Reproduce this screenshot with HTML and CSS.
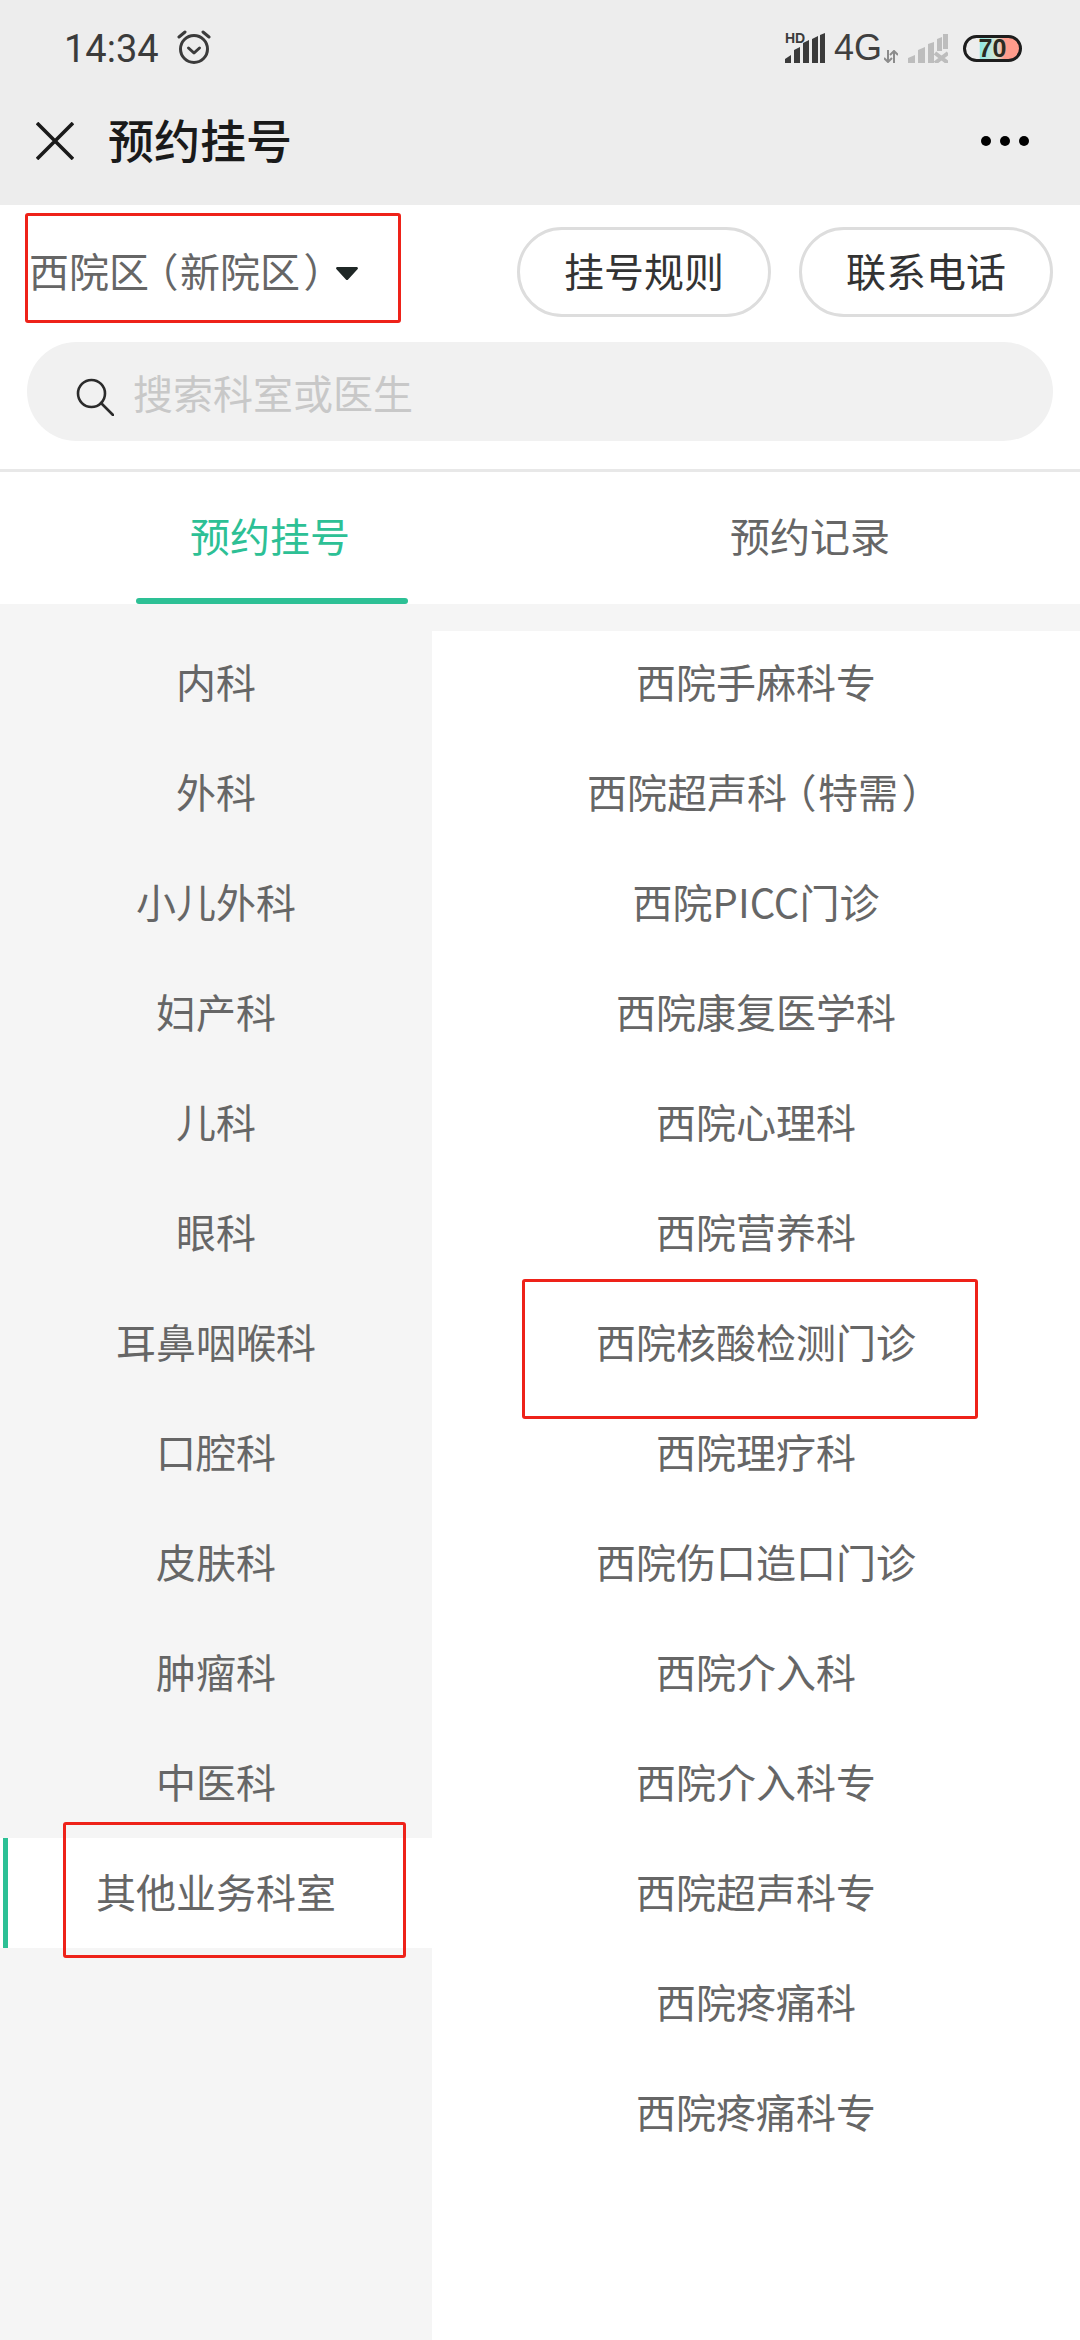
FILE: index.html
```html
<!DOCTYPE html>
<html lang="zh-CN">
  <head>
    <meta charset="UTF-8" />
    <meta name="viewport" content="width=device-width, initial-scale=1.0" />
    <title>预约挂号</title>
    <link rel="stylesheet" href="styles.css">
  </head>
  <body>
    <div class="page">
      <header class="top">
        <div class="status">
          <div class="status-left">
            <span class="time">14:34</span>
            <svg class="alarm" width="34" height="36" viewBox="0 0 34 36" fill="none" stroke="#3b3b3b" stroke-width="3" stroke-linecap="round" stroke-linejoin="round">
              <circle cx="17" cy="20" r="13.5" />
              <path d="M11.5 19l5.5 5 5.500-5" />
              <path d="M2 8l6-5M32 8l-6-5" />
            </svg>
          </div>
          <div class="status-right">
            <div class="signal">
              <span class="hd">HD</span>
              <svg width="40" height="30" viewBox="0 0 40 30" fill="#3b3b3b">
                <path d="M0 30v-4l6-4v8zM9 30V17l6-3v16zM18 30V10l6-3v23zM27 30V6l6-3v27zM35 30V2l5-2v30z" />
              </svg>
            </div>
            <span class="net">4G</span>
            <svg class="updown" width="14" height="13" viewBox="0 0 14 13" fill="none" stroke="#8c8c8c" stroke-width="2">
              <path d="M4 0v12M0 8l4 4 4-4M10 13V1M6 5l4-4 4 4" />
            </svg>
            <svg class="signal-off" width="40" height="29" viewBox="0 0 40 29" fill="#bdbdbd">
              <path d="M0 29v-5l7-3v8zM10 29V16l7-3v16zM20 29V10l6-2v21zM29 17V5l5-2v14zM35 15V0l5-1v16z" />
              <path d="M27 19l13 10M40 19L27 29" fill="none" stroke="#bdbdbd" stroke-width="4" />
            </svg>
            <div class="battery"><span class="battery-num">70</span></div>
          </div>
        </div>
        <nav class="navbar">
          <svg class="close" width="38" height="38" viewBox="0 0 38 38" fill="none" stroke="#1a1a1a" stroke-width="3.600">
            <path d="M1 1l36 36M37 1L1 37" />
          </svg>
          <h1 class="nav-title">预约挂号</h1>
          <div class="more"><i></i><i></i><i></i></div>
        </nav>
      </header>

      <section class="filters">
        <div class="filter-row">
          <div class="campus">
            <span class="campus-name">西院区<span class="paren-open">（</span>新院区<span class="paren-close">）</span></span>
            <svg class="caret" width="22" height="13" viewBox="0 0 22 13" fill="#1f2726">
              <path d="M1.500 0h19c1.300 0 1.900 1.400 1 2.300l-9.400 10.100c-.6.7-1.600.7-2.200 0L.5 2.300C-.4 1.400.2 0 1.500 0z" />
            </svg>
          </div>
          <div class="actions">
            <a class="pill">挂号规则</a>
            <a class="pill">联系电话</a>
          </div>
        </div>
        <div class="search">
          <svg class="search-icon" width="38" height="38" viewBox="0 0 38 38" fill="none" stroke="#2b2b2b" stroke-width="2.600" stroke-linecap="round">
            <circle cx="15.500" cy="15.500" r="13.500" />
            <path d="M25 25l12 12" />
          </svg>
          <span class="search-text">搜索科室或医生</span>
        </div>
      </section>

      <div class="tabs">
        <div class="tab active">预约挂号</div>
        <div class="tab">预约记录</div>
      </div>

      <main class="dept">
        <ul class="dept-left">
          <li>内科</li>
          <li>外科</li>
          <li>小儿外科</li>
          <li>妇产科</li>
          <li>儿科</li>
          <li>眼科</li>
          <li>耳鼻咽喉科</li>
          <li>口腔科</li>
          <li>皮肤科</li>
          <li>肿瘤科</li>
          <li>中医科</li>
          <li class="current">其他业务科室</li>
        </ul>
        <div class="dept-right">
          <ul>
            <li>西院手麻科专</li>
            <li><span>西院超声科<span class="paren-open">（</span>特需<span class="paren-close">）</span></span></li>
            <li>西院PICC门诊</li>
            <li>西院康复医学科</li>
            <li>西院心理科</li>
            <li>西院营养科</li>
            <li>西院核酸检测门诊</li>
            <li>西院理疗科</li>
            <li>西院伤口造口门诊</li>
            <li>西院介入科</li>
            <li>西院介入科专</li>
            <li>西院超声科专</li>
            <li>西院疼痛科</li>
            <li>西院疼痛科专</li>
          </ul>
        </div>
      </main>

      <div class="mark mark-campus"></div>
      <div class="mark mark-clinic"></div>
      <div class="mark mark-other"></div>
    </div>
  </body>
</html>
```

FILE: styles.css
```css
:root {
  --green: #2dc095;
  --text-grey: #666666;
  --left-bg: #f5f5f5;
  --red: #ee2219;
}

* {
  margin: 0;
  padding: 0;
  box-sizing: border-box;
}

body {
  font-family: "Noto Sans CJK SC", "Noto Sans", sans-serif;
  background-color: #ffffff;
  color: var(--text-grey);
}

ul {
  list-style: none;
}

.page {
  position: relative;
  width: 1080px;
  height: 2340px;
  display: flex;
  flex-direction: column;
  overflow: hidden;
}

/* status bar + title */
.top {
  background-color: #ededed;
  height: 205px;
}

.status {
  height: 76px;
  padding: 20px 58px 0 64px;
  display: flex;
  justify-content: space-between;
  align-items: center;
}

.status-left {
  display: flex;
  align-items: center;
}

.time {
  font-family: Roboto, sans-serif;
  font-size: 38px;
  color: #3b3b3b;
  margin-top: 2px;
}

.alarm {
  margin-left: 18px;
  margin-top: -3px;
}

.status-right {
  display: flex;
  align-items: center;
}

.signal {
  position: relative;
  width: 40px;
  height: 30px;
}

.hd {
  position: absolute;
  left: 0;
  top: -2px;
  font-family: "Liberation Sans", sans-serif;
  font-size: 14px;
  line-height: 14px;
  font-weight: 700;
  color: #3b3b3b;
}

.net {
  font-family: "Liberation Sans", sans-serif;
  font-size: 36px;
  line-height: 36px;
  color: #3f3f3f;
  margin-left: 9px;
}

.updown {
  margin: 16px 0 0 2px;
}

.signal-off {
  margin-left: 10px;
}

.battery {
  width: 59px;
  height: 27px;
  margin-left: 15px;
  border: 3px solid #1d1d1d;
  border-radius: 14px;
  overflow: hidden;
  display: flex;
  justify-content: center;
  align-items: center;
  background: linear-gradient(90deg, #ededed 25%, #8fe9e3 27%, #d9e6d6 58%, #ff9c8c 72%, #ff9c8c 100%);
}

.battery-num {
  font-family: "Liberation Sans", sans-serif;
  font-size: 25px;
  font-weight: 700;
  line-height: 21px;
  color: #2b2b22;
}

.navbar {
  height: 129px;
  display: flex;
  align-items: center;
  padding-left: 36px;
  padding-right: 51px;
}

.nav-title {
  font-size: 46px;
  font-weight: 500;
  color: #1a1a1a;
  margin-left: 34px;
  padding-bottom: 5px;
}

.more {
  margin-left: auto;
  display: flex;
  gap: 9px;
}

.more i {
  display: block;
  width: 10px;
  height: 10px;
  border-radius: 50%;
  background-color: #000000;
}

/* campus picker, buttons, search */
.filters {
  height: 267px;
  padding: 22px 27px 0;
  border-bottom: 3px solid #e8e8e8;
}

.filter-row {
  display: flex;
  justify-content: space-between;
  align-items: center;
  height: 90px;
}

.campus {
  display: flex;
  align-items: center;
  font-size: 40px;
  color: var(--text-grey);
  padding-left: 2px;
}

.campus-name {
  padding-bottom: 5px;
}

/* the brackets are narrow in the reference, not full width */
.paren-open,
.paren-close {
  font-feature-settings: "palt";
}

.paren-open {
  margin: 0 3px 0 8px;
}

.paren-close {
  margin: 0 2px 0 5px;
}

.caret {
  margin-left: 9px;
  margin-top: 2px;
}

.actions {
  display: flex;
  gap: 28px;
}

.pill {
  width: 254px;
  height: 90px;
  padding-bottom: 4px;
  border: 3px solid #dddddd;
  border-radius: 45px;
  display: flex;
  justify-content: center;
  align-items: center;
  font-size: 40px;
  color: #333333;
}

.search {
  height: 99px;
  margin-top: 25px;
  padding-left: 49px;
  border-radius: 50px;
  background-color: #f1f1f1;
  display: flex;
  align-items: center;
}

.search-icon {
  margin-top: 10px;
}

.search-text {
  margin-left: 19px;
  font-size: 40px;
  color: #c8c8c8;
}

/* tabs */
.tabs {
  height: 132px;
  display: flex;
}

.tab {
  position: relative;
  flex: 1;
  padding-bottom: 6px;
  display: flex;
  justify-content: center;
  align-items: center;
  font-size: 40px;
  color: var(--text-grey);
}

.tab.active {
  color: var(--green);
}

.tab.active::after {
  content: "";
  position: absolute;
  left: 136px;
  bottom: 0;
  width: 272px;
  height: 6px;
  border-radius: 3px;
  background-color: var(--green);
}

/* department lists */
.dept {
  flex: 1;
  display: flex;
  background-color: var(--left-bg);
}

.dept li {
  height: 110px;
  padding-bottom: 5px;
  display: flex;
  justify-content: center;
  align-items: center;
  font-size: 40px;
  color: var(--text-grey);
}

.dept-left {
  width: 432px;
  padding-top: 24px;
}

.dept-left .current {
  position: relative;
  background-color: #ffffff;
}

.dept-left .current::before {
  content: "";
  position: absolute;
  left: 3px;
  top: 0;
  width: 5px;
  height: 100%;
  background-color: var(--green);
}

.dept-right {
  flex: 1;
  margin-top: 27px;
  background-color: #ffffff;
}

.dept-right ul {
  margin-top: -3px;
}

/* red annotation boxes drawn over the screenshot */
.mark {
  position: absolute;
  border: 3px solid var(--red);
  border-radius: 3px;
}

.mark-campus {
  left: 25px;
  top: 213px;
  width: 376px;
  height: 110px;
}

.mark-clinic {
  left: 522px;
  top: 1279px;
  width: 456px;
  height: 140px;
}

.mark-other {
  left: 63px;
  top: 1822px;
  width: 343px;
  height: 136px;
}
```
